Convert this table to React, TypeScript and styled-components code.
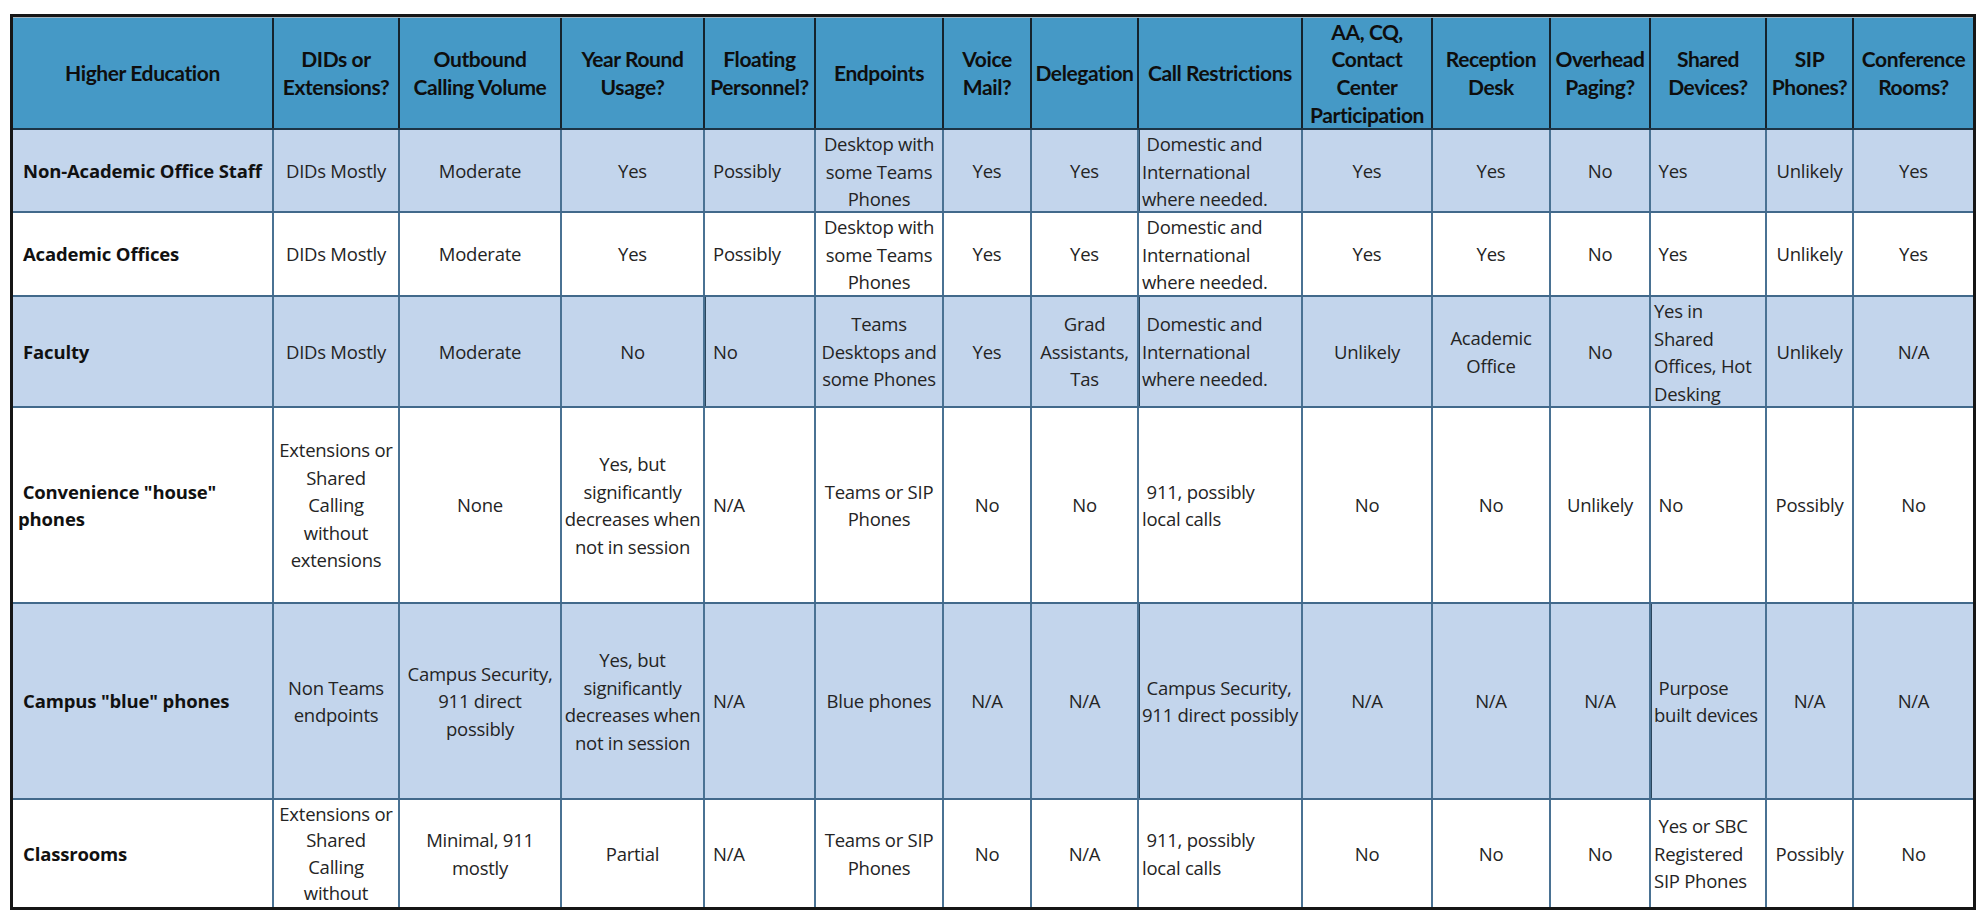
import React from "react";
import styled, { createGlobalStyle } from "styled-components";

type Align = "center" | "left" | "tight";

interface Column {
  width: number;
  align: Align;
}

interface CellData {
  text: string;
  align?: Align;
  strong?: boolean;
  dense?: boolean;
}

const columns: Column[] = [
  { width: 261, align: "left" },
  { width: 126, align: "center" },
  { width: 162, align: "center" },
  { width: 143, align: "center" },
  { width: 111, align: "left" },
  { width: 128, align: "center" },
  { width: 88, align: "center" },
  { width: 107, align: "center" },
  { width: 164, align: "tight" },
  { width: 130, align: "center" },
  { width: 118, align: "center" },
  { width: 100, align: "center" },
  { width: 116, align: "tight" },
  { width: 87, align: "center" },
  { width: 119, align: "center" },
];

const gridColumns = columns.map((c) => `${c.width}px`).join(" ");

const headers = [
  "Higher Education",
  "DIDs or|Extensions?",
  "Outbound|Calling Volume",
  "Year Round|Usage?",
  "Floating|Personnel?",
  "Endpoints",
  "Voice|Mail?",
  "Delegation",
  "Call Restrictions",
  "AA, CQ,|Contact|Center|Participation",
  "Reception|Desk",
  "Overhead|Paging?",
  "Shared|Devices?",
  "SIP|Phones?",
  "Conference|Rooms?",
];

const domestic = " Domestic and|International|where needed.";
const localCalls = " 911, possibly|local calls";
const notInSession = "Yes, but|significantly|decreases when|not in session";

// Word table artefact: a few cells have a heavier rule on their left edge
const strong = (text: string): CellData => ({ text, strong: true });

const rows: { height: number; shade: boolean; cells: (string | CellData)[] }[] = [
  {
    height: 83,
    shade: true,
    cells: [
      "Non-Academic Office Staff",
      "DIDs Mostly",
      "Moderate",
      "Yes",
      "Possibly",
      "Desktop with|some Teams|Phones",
      "Yes",
      "Yes",
      strong(domestic),
      "Yes",
      "Yes",
      "No",
      " Yes",
      "Unlikely",
      "Yes",
    ],
  },
  {
    height: 84,
    shade: false,
    cells: [
      "Academic Offices",
      "DIDs Mostly",
      "Moderate",
      "Yes",
      "Possibly",
      "Desktop with|some Teams|Phones",
      "Yes",
      "Yes",
      domestic,
      "Yes",
      "Yes",
      "No",
      " Yes",
      "Unlikely",
      "Yes",
    ],
  },
  {
    height: 111,
    shade: true,
    cells: [
      "Faculty",
      "DIDs Mostly",
      "Moderate",
      "No",
      strong("No"),
      "Teams|Desktops and|some Phones",
      "Yes",
      "Grad|Assistants,|Tas",
      strong(domestic),
      "Unlikely",
      "Academic|Office",
      "No",
      "Yes in|Shared|Offices, Hot|Desking",
      "Unlikely",
      "N/A",
    ],
  },
  {
    height: 196,
    shade: false,
    cells: [
      { text: ' Convenience "house"|phones', align: "tight" },
      "Extensions or|Shared|Calling|without|extensions",
      "None",
      notInSession,
      "N/A",
      "Teams or SIP|Phones",
      "No",
      "No",
      localCalls,
      "No",
      "No",
      "Unlikely",
      " No",
      "Possibly",
      "No",
    ],
  },
  {
    height: 196,
    shade: true,
    cells: [
      'Campus "blue" phones',
      "Non Teams|endpoints",
      "Campus Security,|911 direct|possibly",
      notInSession,
      "N/A",
      "Blue phones",
      "N/A",
      "N/A",
      strong(" Campus Security,|911 direct possibly"),
      "N/A",
      "N/A",
      "N/A",
      strong(" Purpose|built devices"),
      "N/A",
      "N/A",
    ],
  },
  {
    // last row is cut by the page edge, like the source document
    height: 107,
    shade: false,
    cells: [
      "Classrooms",
      { text: "Extensions or|Shared|Calling|without", dense: true },
      "Minimal, 911|mostly",
      "Partial",
      "N/A",
      "Teams or SIP|Phones",
      "No",
      "N/A",
      localCalls,
      "No",
      "No",
      "No",
      " Yes or SBC|Registered|SIP Phones",
      "Possibly",
      "No",
    ],
  },
];

const GlobalStyle = createGlobalStyle`
  html, body {
    margin: 0;
    padding: 0;
    background: #ffffff;
  }
  body {
    font-family: "Open Sans", "Noto Sans", sans-serif;
  }
`;

const Sheet = styled.div`
  margin: 14px 0 0 10px;
  width: 1966px;
  height: 896px;
  box-sizing: border-box;
  border: 3px solid #161616;
  overflow: hidden;
`;

const HeaderRow = styled.div`
  display: grid;
  grid-template-columns: ${gridColumns};
  height: 113px;
  box-sizing: border-box;
  background: #4599c6;
  border-top: 1px solid #a3b3bd;
  border-bottom: 2px solid #1c3446;
`;

const HeaderCell = styled.div`
  display: flex;
  flex-direction: column;
  justify-content: center;
  align-items: center;
  text-align: center;
  padding: 0 3px;
  border-right: 2px solid #15232d;
  font-family: Lato, "Open Sans", sans-serif;
  font-weight: 700;
  font-size: 21px;
  letter-spacing: -0.4px;
  line-height: 27.7px;
  color: #0e0e0e;
  overflow: hidden;

  &:last-child {
    border-right: none;
  }
`;

const BodyRow = styled.div<{ $height: number; $shade: boolean }>`
  display: grid;
  grid-template-columns: ${gridColumns};
  height: ${({ $height }) => $height}px;
  box-sizing: border-box;
  background: ${({ $shade }) => ($shade ? "#c3d5ec" : "#ffffff")};
  border-bottom: 2px solid #42698b;
  overflow: hidden;

  &:last-child {
    border-bottom: none;
  }
`;

const BodyCell = styled.div<{ $align: Align; $first: boolean; $strong: boolean; $dense: boolean }>`
  display: flex;
  flex-direction: column;
  justify-content: safe center;
  align-items: ${({ $align }) => ($align === "center" ? "center" : "flex-start")};
  text-align: ${({ $align }) => ($align === "center" ? "center" : "left")};
  padding: 0
    ${({ $align, $first }) =>
      $align === "center" ? "2px" : $align === "tight" ? ($first ? "5px" : "3px") : $first ? "10px" : "8px"};
  border-right: 2px solid #4a7293;
  box-shadow: ${({ $strong }) => ($strong ? "inset 1px 0 0 #2a465d" : "none")};
  font-size: 18.5px;
  font-weight: ${({ $first }) => ($first ? 700 : 400)};
  letter-spacing: ${({ $first }) => ($first ? "-0.15px" : "-0.25px")};
  line-height: ${({ $dense }) => ($dense ? "26.5px" : "27.5px")};
  color: ${({ $first }) => ($first ? "#111111" : "#242424")};
  overflow: hidden;

  &:last-child {
    border-right: none;
  }
`;

const Line = styled.span`
  display: block;
  white-space: pre;
`;

const Lines: React.FC<{ text: string }> = ({ text }) => (
  <>
    {text.split("|").map((line, i) => (
      <Line key={i}>{line}</Line>
    ))}
  </>
);

const App: React.FC = () => {
  return (
    <>
      <GlobalStyle />
      <Sheet>
        <HeaderRow>
          {headers.map((h, i) => (
            <HeaderCell key={i}>
              <Lines text={h} />
            </HeaderCell>
          ))}
        </HeaderRow>
        {rows.map((row, r) => (
          <BodyRow key={r} $height={row.height} $shade={row.shade}>
            {row.cells.map((cell, i) => {
              const data: CellData = typeof cell === "string" ? { text: cell } : cell;
              return (
                <BodyCell
                  key={i}
                  $align={data.align ?? columns[i].align}
                  $first={i === 0}
                  $strong={!!data.strong}
                  $dense={!!data.dense}
                >
                  <Lines text={data.text} />
                </BodyCell>
              );
            })}
          </BodyRow>
        ))}
      </Sheet>
    </>
  );
};

export default App;
